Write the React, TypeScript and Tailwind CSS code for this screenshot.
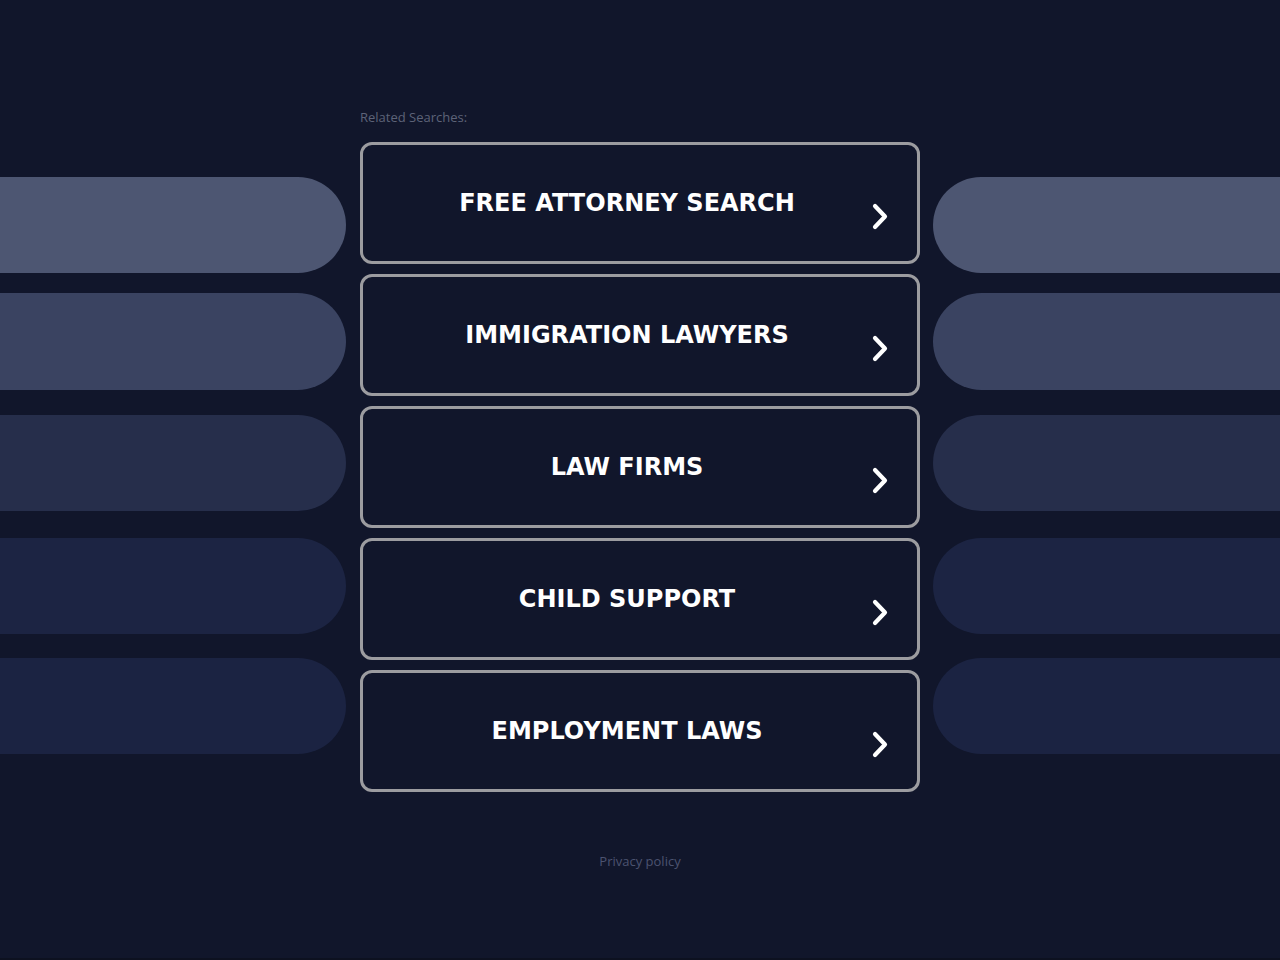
import React from "react";

const items = [
  "FREE ATTORNEY SEARCH",
  "IMMIGRATION LAWYERS",
  "LAW FIRMS",
  "CHILD SUPPORT",
  "EMPLOYMENT LAWS",
];

function Chevron() {
  return (
    <svg width="20" height="28" viewBox="0 0 20 28" className="absolute right-[27px] top-[57px]">
      <polyline
        points="5,4 15,14.5 5,25"
        fill="none"
        stroke="#ffffff"
        strokeWidth="4.2"
        strokeLinecap="round"
        strokeLinejoin="round"
      />
    </svg>
  );
}

function Pills({ side }: { side: "left" | "right" }) {
  const r = side === "left" ? "rounded-r-full" : "rounded-l-full";
  return (
    <div className="flex flex-col pt-[177px]">
      <div className={`h-[96px] bg-[#4d5672] ${r}`} />
      <div className={`h-[97px] mt-[20px] bg-[#3a4361] ${r}`} />
      <div className={`h-[96px] mt-[25px] bg-[#262e4b] ${r}`} />
      <div className={`h-[96px] mt-[27px] bg-[#1c2443] ${r}`} />
      <div className={`h-[96px] mt-[24px] bg-[#1b2342] ${r}`} />
    </div>
  );
}

export default function App() {
  return (
    <div className="w-full h-[960px] bg-[#11162b] flex overflow-hidden border-b-2 border-[#0d1120]">
      <div className="w-[346px] shrink-0">
        <Pills side="left" />
      </div>
      <div className="w-[560px] shrink-0 ml-[14px] flex flex-col pt-[108px]">
        <div
          className="text-[13px] leading-[18px] text-[#5d6378]"
          style={{ fontFamily: '"Open Sans", "Noto Sans", sans-serif' }}
        >
          Related Searches:
        </div>
        <div className="flex flex-col gap-[10px] mt-[16px]">
          {items.map((t) => (
            <div
              key={t}
              className="relative h-[122px] rounded-[12px] border-[3px] border-[#9c9ca0] bg-[#11162b] flex items-center justify-center pr-[26px]"
            >
              <span
                className="text-white font-bold text-[24px] leading-none"
                style={{ fontFamily: '"DejaVu Sans", sans-serif' }}
              >
                {t}
              </span>
              <Chevron />
            </div>
          ))}
        </div>
        <div
          className="mt-[60px] text-center text-[13px] leading-[18px] text-[#4c5370]"
          style={{ fontFamily: '"Open Sans", "Noto Sans", sans-serif' }}
        >
          Privacy policy
        </div>
      </div>
      <div className="flex-1 ml-[13px]">
        <Pills side="right" />
      </div>
    </div>
  );
}
